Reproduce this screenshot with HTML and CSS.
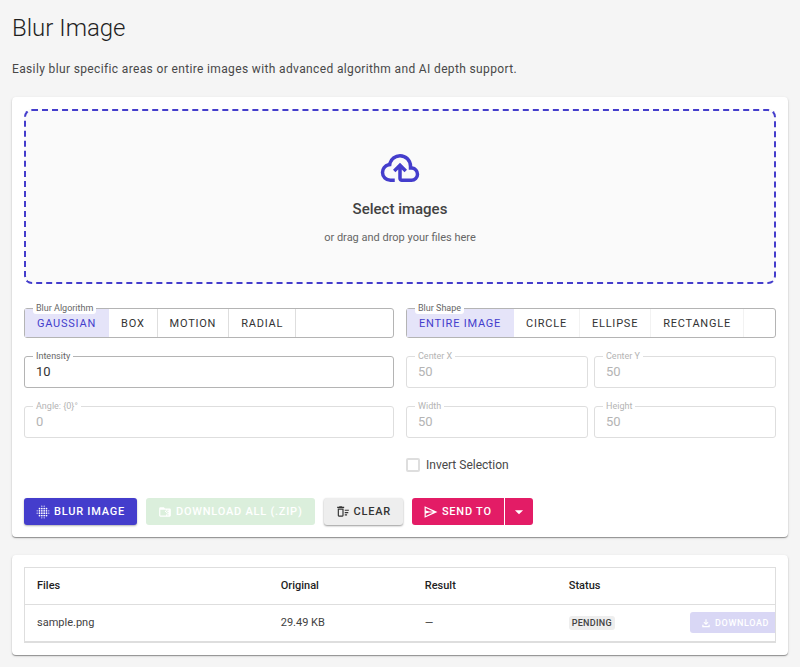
FILE: index.html
```html
<!DOCTYPE html>
<html lang="en">
<head>
    <meta charset="UTF-8">
    <meta name="viewport" content="width=device-width, initial-scale=1.0">
    <title>Blur Image</title>
    <link rel="stylesheet" href="styles.css">
</head>
<body>
    <main class="page">
        <h1>Blur Image</h1>
        <p class="lead">Easily blur specific areas or entire images with advanced algorithm and AI depth support.</p>

        <section class="card">
            <!-- Drop zone -->
            <button type="button" class="dropzone">
                <svg class="dropzone-icon" viewBox="0 0 24 24"><path d="M6.5 20q-2.28 0-3.89-1.57Q1 16.85 1 14.58q0-1.95 1.17-3.48 1.18-1.53 3.08-1.95.63-2.3 2.5-3.72Q9.63 4 12 4q2.93 0 4.96 2.04Q19 8.07 19 11q1.73.2 2.86 1.5 1.14 1.28 1.14 3 0 1.88-1.31 3.19T18.5 20H13q-.82 0-1.41-.59Q11 18.83 11 18v-5.15L9.4 14.4 8 13l4-4 4 4-1.4 1.4-1.6-1.55V18h5.5q1.05 0 1.77-.73.73-.72.73-1.77t-.73-1.77Q19.55 13 18.5 13H17v-2q0-2.07-1.46-3.54Q14.08 6 12 6 9.93 6 8.46 7.46 7 8.93 7 11h-.5q-1.45 0-2.47 1.03Q3 13.05 3 14.5T4.03 17q1.02 1 2.47 1H9v2z"/></svg>
                <span class="dropzone-title">Select images</span>
                <span class="dropzone-hint">or drag and drop your files here</span>
            </button>

            <form class="options">
                <!-- Algorithm -->
                <div class="options-col">
                    <div class="field toggle" role="group" aria-labelledby="algorithmLabel">
                        <span class="field-label" id="algorithmLabel">Blur Algorithm</span>
                        <button type="button" class="toggle-btn active" aria-pressed="true">Gaussian</button>
                        <button type="button" class="toggle-btn" aria-pressed="false">Box</button>
                        <button type="button" class="toggle-btn" aria-pressed="false">Motion</button>
                        <button type="button" class="toggle-btn" aria-pressed="false">Radial</button>
                    </div>
                    <div class="field">
                        <label class="field-label" for="intensity">Intensity</label>
                        <input type="text" inputmode="numeric" id="intensity" value="10">
                    </div>
                    <div class="field disabled">
                        <label class="field-label" for="angle">Angle: {0}°</label>
                        <input type="text" inputmode="numeric" id="angle" value="0" disabled>
                    </div>
                </div>

                <!-- Shape -->
                <div class="options-col">
                    <div class="field toggle light" role="group" aria-labelledby="shapeLabel">
                        <span class="field-label" id="shapeLabel">Blur Shape</span>
                        <button type="button" class="toggle-btn active" aria-pressed="true">Entire Image</button>
                        <button type="button" class="toggle-btn" aria-pressed="false">Circle</button>
                        <button type="button" class="toggle-btn" aria-pressed="false">Ellipse</button>
                        <button type="button" class="toggle-btn" aria-pressed="false">Rectangle</button>
                    </div>
                    <div class="field-pair">
                        <div class="field disabled">
                            <label class="field-label" for="centerX">Center X</label>
                            <input type="text" inputmode="numeric" id="centerX" value="50" disabled>
                        </div>
                        <div class="field disabled">
                            <label class="field-label" for="centerY">Center Y</label>
                            <input type="text" inputmode="numeric" id="centerY" value="50" disabled>
                        </div>
                    </div>
                    <div class="field-pair">
                        <div class="field disabled">
                            <label class="field-label" for="shapeWidth">Width</label>
                            <input type="text" inputmode="numeric" id="shapeWidth" value="50" disabled>
                        </div>
                        <div class="field disabled">
                            <label class="field-label" for="shapeHeight">Height</label>
                            <input type="text" inputmode="numeric" id="shapeHeight" value="50" disabled>
                        </div>
                    </div>
                    <div class="check-row">
                        <input type="checkbox" id="invert">
                        <label for="invert">Invert Selection</label>
                    </div>
                </div>
            </form>

            <!-- Actions -->
            <div class="actions">
                <button type="button" class="btn btn-primary">
                    <svg viewBox="0 0 24 24">
                        <g class="dots" stroke-width="3" stroke-dasharray="0 4">
                            <path d="M6 6h13M6 10h13M6 14h13M6 18h13"/>
                        </g>
                        <g class="dots" stroke-width="2" stroke-dasharray="0 4">
                            <path d="M10 2h5M10 22h5M2 10v5M22 10v5"/>
                        </g>
                    </svg>
                    Blur Image
                </button>
                <button type="button" class="btn btn-success" disabled>
                    <svg viewBox="0 0 24 24"><path d="M20 6h-8l-2-2H4a2 2 0 0 0-2 2v12a2 2 0 0 0 2 2h16a2 2 0 0 0 2-2V8a2 2 0 0 0-2-2m-4 6h2v2h-2v2h2v2h-2v-2h-2v2H4V8h10v2h2V8h2v2h-2zm0 0h-2v-2h-2v2h2v2h2z"/></svg>
                    Download all (.zip)
                </button>
                <button type="button" class="btn btn-plain">
                    <svg viewBox="0 0 24 24"><path d="M15 16h4v2h-4zm0-8h7v2h-7zm0 4h6v2h-6zM11 8v10H5V8zm2-2H3v12a2 2 0 0 0 2 2h6a2 2 0 0 0 2-2zm1-3h-3l-1-1H6L5 3H2v2h12z"/></svg>
                    Clear
                </button>
                <div class="btn-group">
                    <button type="button" class="btn btn-pink">
                        <svg viewBox="0 0 24 24"><path fill-rule="evenodd" d="M1 2v20l22-10zm2 3 12.500 6H9L3 9.500zm0 14v-4.500L9 13h6.500z"/></svg>
                        Send to
                    </button>
                    <button type="button" class="btn btn-pink btn-caret" aria-label="Choose target">
                        <svg viewBox="0 0 24 24"><path d="m5 9 7 7 7-7z"/></svg>
                    </button>
                </div>
            </div>
        </section>

        <section class="card">
            <div class="table-wrap">
                <table>
                    <thead>
                        <tr>
                            <th class="col-file">Files</th>
                            <th class="col-data">Original</th>
                            <th class="col-data">Result</th>
                            <th class="col-status">Status</th>
                            <th></th>
                        </tr>
                    </thead>
                    <tbody>
                        <tr>
                            <td>sample.png</td>
                            <td>29.49 KB</td>
                            <td>—</td>
                            <td><span class="badge">PENDING</span></td>
                            <td>
                                <button type="button" class="btn btn-small" disabled>
                                    <svg viewBox="0 0 24 24"><path d="M12 17 6 11l1.800-1.800 2.900 2.900V3h2.600v9.100l2.900-2.900L18 11zm-9 5v-6h3v3h12v-3h3v6z"/></svg>
                                    Download
                                </button>
                            </td>
                        </tr>
                    </tbody>
                </table>
            </div>
        </section>
    </main>
</body>
</html>
```
FILE: styles.css
```css
:root {
    --primary: #443dcc;
    --primary-light: #e5e4f9;
    --pink: #e31c66;
    --text: #1f1f1f;
    --muted: #666666;
    --border: #b4b4b4;
    --border-light: #dedede;
    --bg: #f5f5f5;
}

* {
    box-sizing: border-box;
}

body {
    margin: 0;
    background: var(--bg);
    color: var(--text);
    font-family: Roboto, "Liberation Sans", sans-serif;
}

button,
input {
    font-family: inherit;
}

svg {
    fill: currentColor;
    flex-shrink: 0;
}

.page {
    padding: 12px;
}

h1 {
    margin: 0;
    font-size: 24px;
    font-weight: 300;
    line-height: 32px;
}

.lead {
    margin: 16px 0 19px;
    color: #484848;
    font-size: 12px;
    line-height: 18px;
    letter-spacing: 0.03em;
}

.card {
    margin-bottom: 18px;
    padding: 12px;
    background: white;
    border-radius: 4px;
    box-shadow: 0 1px 1px rgba(0,0,0,0.36), 0 1px 3px rgba(0,0,0,0.12);
}

.dropzone {
    display: flex;
    flex-direction: column;
    align-items: center;
    width: 100%;
    padding: 36px 12px;
    background: #fafafa;
    border: 2px dashed var(--primary);
    border-radius: 8px;
}

.dropzone-icon {
    width: 42px;
    height: 42px;
    color: var(--primary);
}

.dropzone-title {
    margin-top: 8px;
    color: #424242;
    font-size: 15px;
    font-weight: 500;
    line-height: 24px;
}

.dropzone-hint {
    margin-top: 8px;
    color: var(--muted);
    font-size: 11px;
    line-height: 17px;
}

.options {
    display: grid;
    grid-template-columns: 1fr 1fr;
    gap: 12px;
    margin: 24px 0;
}

.options-col {
    display: flex;
    flex-direction: column;
    gap: 18px;
}

.field-pair {
    display: grid;
    grid-template-columns: 1fr 1fr;
    gap: 6px;
}

.field {
    position: relative;
    display: flex;
    height: 32px;
    border: 1px solid var(--border);
    border-radius: 3px;
}

.field-label {
    position: absolute;
    top: -7px;
    left: 8px;
    padding: 0 3px;
    background: white;
    border-radius: 3px;
    color: var(--muted);
    font-size: 9px;
    line-height: 12px;
}

.field input {
    width: 100%;
    padding: 0 11px 2px;
    background: none;
    border: none;
    color: #333333;
    font-size: 13px;
}

.field.disabled {
    border-color: var(--border-light);
}

.field.disabled .field-label,
.field.disabled input {
    color: #b4b4b4;
}

.toggle {
    height: 30px;
}

.toggle-btn {
    padding: 0 12px;
    background: white;
    border: none;
    border-right: 1px solid var(--border-light);
    color: #333333;
    font-size: 11px;
    font-weight: 400;
    letter-spacing: 0.07em;
    text-transform: uppercase;
}

.toggle.light .toggle-btn {
    border-color: #f2f2f2;
}

.toggle .toggle-btn.active {
    background: var(--primary-light);
    border-color: var(--primary-light);
    color: var(--primary);
}

.check-row {
    display: flex;
    align-items: center;
    gap: 6px;
    height: 18px;
    color: #484848;
    font-size: 12px;
}

.check-row input {
    appearance: none;
    width: 14px;
    height: 14px;
    margin: 0;
    border: 2px solid #dedede;
    border-radius: 2px;
}

.actions {
    display: flex;
    gap: 9px;
}

.btn {
    display: flex;
    align-items: center;
    gap: 4px;
    height: 27px;
    padding: 0 12px;
    border: none;
    border-radius: 3px;
    color: white;
    font-size: 11px;
    font-weight: 500;
    letter-spacing: 0.07em;
    text-transform: uppercase;
    white-space: nowrap;
}

.btn svg {
    width: 14px;
    height: 14px;
}

.dots {
    fill: none;
    stroke: currentColor;
    stroke-linecap: round;
}

.btn-primary {
    background: var(--primary);
    box-shadow: 0 1px 2px rgba(0,0,0,0.3);
}

.btn-success {
    background: #dbefdc;
}

.btn-plain {
    background: #eeeeee;
    color: #333333;
    box-shadow: 0 1px 2px rgba(0,0,0,0.4);
}

.btn-pink {
    background: var(--pink);
}

.btn-group {
    display: flex;
    gap: 1px;
}

.btn-group .btn:first-child {
    border-radius: 3px 0 0 3px;
}

.btn-group .btn:last-child {
    border-radius: 0 3px 3px 0;
}

.btn-group .btn-caret {
    padding: 0 7px;
}

.table-wrap {
    overflow: hidden;
    border: 1px solid var(--border-light);
    border-bottom-width: 2px;
}

table {
    width: 100%;
    border-collapse: collapse;
    table-layout: fixed;
    font-size: 11px;
}

th,
td {
    height: 36px;
    padding: 0 0 0 12px;
    text-align: left;
}

th {
    border-bottom: 1px solid var(--border-light);
    font-weight: 500;
}

td {
    height: 37px;
    color: #424242;
}

.col-file {
    width: 32.5%;
}

.col-data {
    width: 19.2%;
}

.col-status {
    width: 16%;
}

.badge {
    padding: 2px 3px;
    background: #eeeeee;
    border-radius: 3px;
    font-size: 9px;
    font-weight: 500;
    letter-spacing: 0.03em;
}

.btn-small {
    height: 21px;
    margin-left: auto;
    padding: 0 6px 0 11px;
    background: #d9d7f5;
    border-radius: 3px 0 0 3px;
    font-size: 9px;
}

.btn-small svg {
    width: 10px;
    height: 10px;
}
```
